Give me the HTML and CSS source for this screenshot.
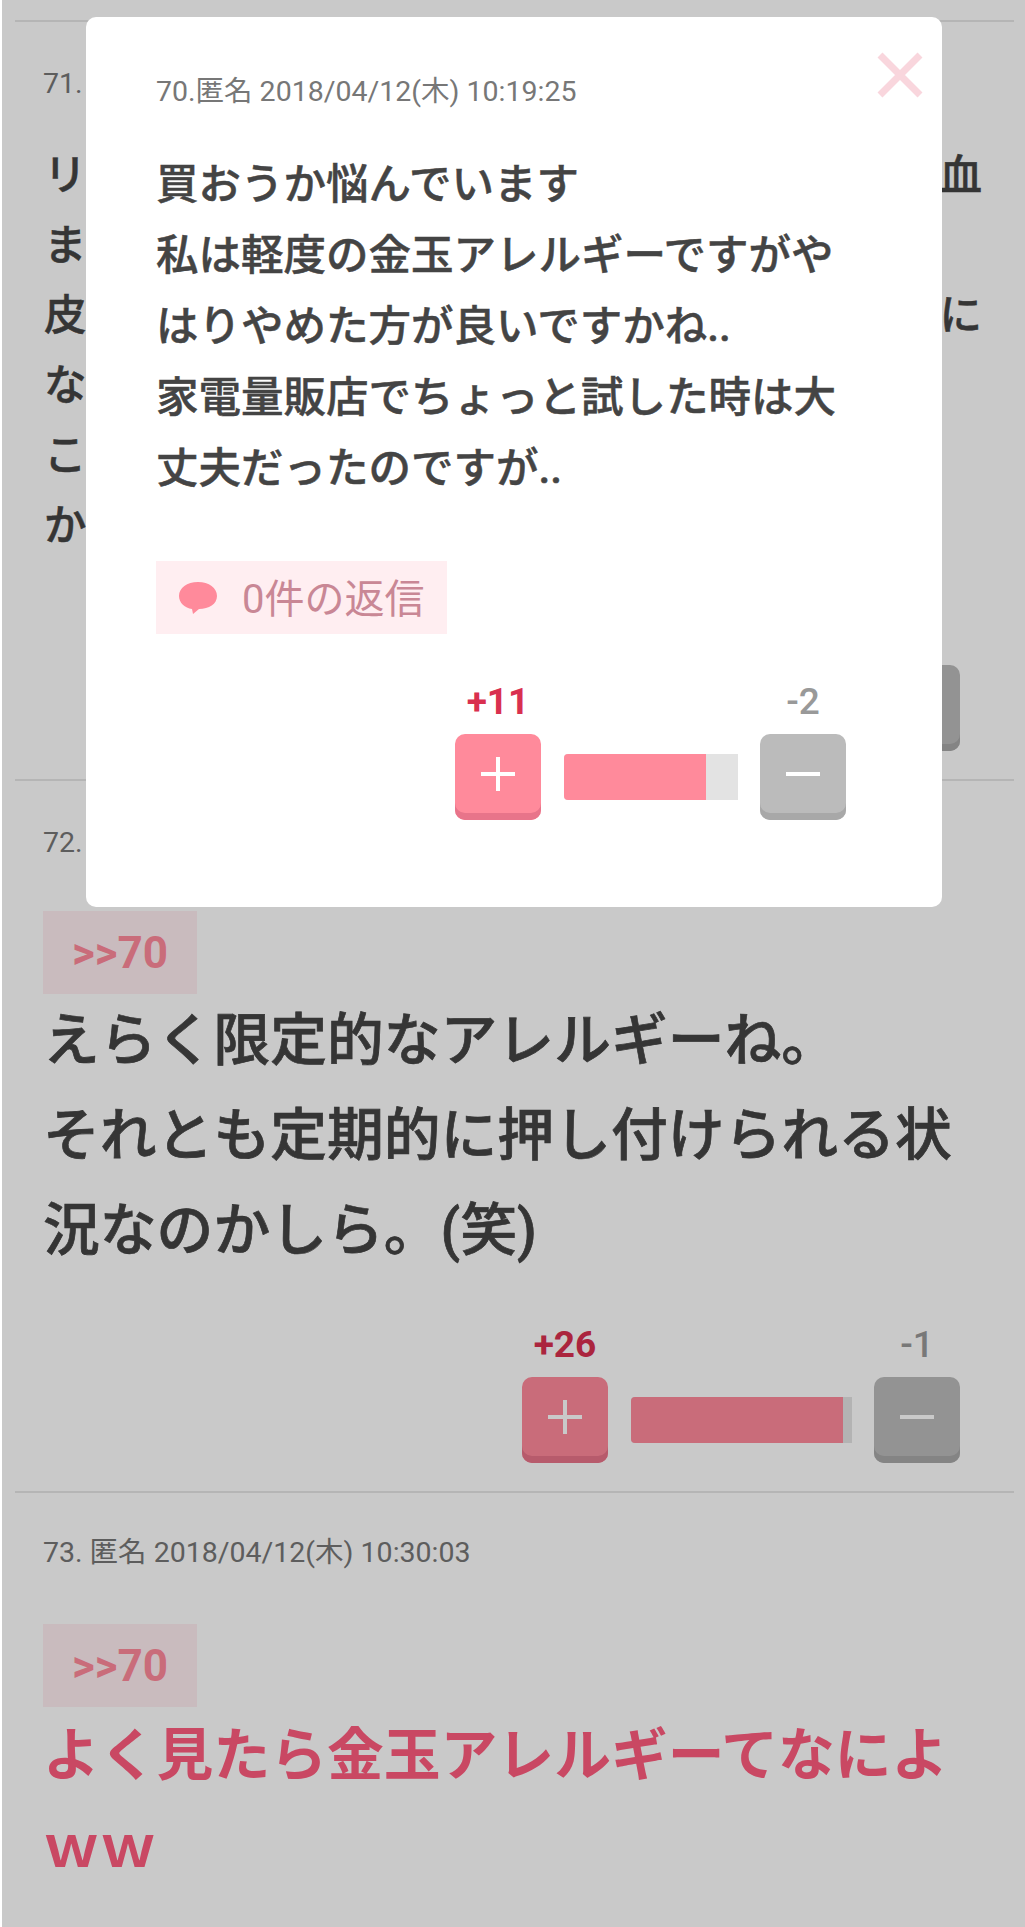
FILE: index.html
```html
<!DOCTYPE html>
<html lang="ja">
<head>
    <meta charset="UTF-8">
    <meta name="viewport" content="width=device-width, initial-scale=1.0">
    <title>コメント</title>
    <link rel="stylesheet" href="styles.css">
</head>
<body>
    <div class="thread">
        <div class="post">
            <div class="info">71.</div>
            <div class="cut-text">
                <div class="cut-line"><span>リ</span><span>血</span></div>
                <div class="cut-line"><span>ま</span></div>
                <div class="cut-line"><span>皮</span><span>に</span></div>
                <div class="cut-line"><span>な</span></div>
                <div class="cut-line"><span>こ</span></div>
                <div class="cut-line"><span>か</span></div>
            </div>
            <div class="votes votes-71">
                <div class="plus-count">+</div>
                <div></div>
                <div class="minus-count">-</div>
                <div class="vote-btn plus"></div>
                <div class="bar"></div>
                <div class="vote-btn minus"></div>
            </div>
        </div>
        <div class="post">
            <div class="info">72.</div>
            <div class="anchor">&gt;&gt;70</div>
            <div class="big-text">えらく限定的なアレルギーね。<br>それとも定期的に押し付けられる状<br>況なのかしら。(笑)</div>
            <div class="votes">
                <div class="plus-count">+26</div>
                <div></div>
                <div class="minus-count">-1</div>
                <div class="vote-btn plus">
                    <svg viewBox="0 0 40 40"><path d="M20 3V37M3 20H37"/></svg>
                </div>
                <div class="bar"><div class="bar-fill" style="width: 96%"></div></div>
                <div class="vote-btn minus">
                    <svg viewBox="0 0 40 40"><path d="M3 20H37"/></svg>
                </div>
            </div>
        </div>
        <div class="post post-last">
            <div class="info">73. 匿名 2018/04/12(木) 10:30:03</div>
            <div class="anchor">&gt;&gt;70</div>
            <div class="big-text red">よく見たら金玉アレルギーてなによ<br>ｗｗ</div>
        </div>
    </div>

    <div class="overlay"></div>

    <div class="modal">
        <svg class="close" viewBox="0 0 46 46"><path d="M3 3L43 43M43 3L3 43"/></svg>
        <div class="info">70.匿名 2018/04/12(木) 10:19:25</div>
        <div class="modal-text">買おうか悩んでいます<br>私は軽度の金玉アレルギーですがや<br>はりやめた方が良いですかね..<br>家電量販店でちょっと試した時は大<br>丈夫だったのですが..</div>
        <div class="reply">
            <svg viewBox="0 0 40 34"><path d="M20 1C31 1 39 7 39 15C39 23 31 28 21 28L15 33L14 28C7 27 1 22 1 15C1 7 9 1 20 1Z"/></svg>
            <span>0件の返信</span>
        </div>
        <div class="votes votes-modal">
            <div class="plus-count">+11</div>
            <div></div>
            <div class="minus-count">-2</div>
            <div class="vote-btn plus">
                <svg viewBox="0 0 40 40"><path d="M20 3V37M3 20H37"/></svg>
            </div>
            <div class="bar"><div class="bar-fill" style="width: 82%"></div></div>
            <div class="vote-btn minus">
                <svg viewBox="0 0 40 40"><path d="M3 20H37"/></svg>
            </div>
        </div>
    </div>
</body>
</html>
```

FILE: styles.css
```css
html, body {
    margin: 0;
    padding: 0;
}

body {
    position: relative;
    height: 1927px;
    overflow: hidden;
    background: #fff;
    color: #444;
    font-family: Roboto, "Noto Sans CJK JP", sans-serif;
}

.thread {
    margin: 20px 11px 0 15px;
    border-top: 2px solid #e6e6e6;
}

.post {
    padding: 44px 0 28px 28px;
    border-bottom: 2px solid #e6e6e6;
}

.post-last {
    padding-top: 42px;
    border-bottom: none;
}

.post-last .anchor {
    margin-top: 53px;
}

.info {
    font-size: 28.5px;
    line-height: 36px;
    color: #777;
    white-space: nowrap;
}

/* post behind the popup, only the edges can be seen */
.cut-text {
    margin-top: 39px;
    font-size: 42.5px;
    font-weight: 500;
    -webkit-text-stroke: 0.5px #444;
    line-height: 70px;
}

.cut-line {
    display: flex;
    justify-content: space-between;
    margin-left: 1px;
    padding-right: 32px;
}

.anchor {
    width: 154px;
    height: 83px;
    margin: 50px 0 -1px;
    background: #ffeef1;
    color: #ff8a9b;
    font-size: 44px;
    font-weight: 700;
    line-height: 84px;
    text-align: center;
}

.big-text {
    font-size: 56.8px;
    font-weight: 500;
    -webkit-text-stroke: 0.7px #444;
    line-height: 95px;
    white-space: nowrap;
}

.red {
    margin-top: 4px;
    color: #ff5c7e;
    font-weight: 700;
    -webkit-text-stroke: 0;
    line-height: 92px;
}

.votes {
    display: grid;
    grid-template-columns: 86px 221px 86px;
    column-gap: 22.5px;
    row-gap: 14px;
    justify-content: end;
    align-items: center;
    margin: 49px 54px 0 0;
    text-align: center;
    font-size: 37px;
    line-height: 36px;
}

.votes-71 {
    margin-top: 54px;
}

.plus-count {
    color: #d9304f;
    font-weight: 700;
}

.minus-count {
    color: #999;
    font-weight: 500;
}

.vote-btn {
    display: flex;
    align-items: center;
    justify-content: center;
    height: 80px;
    padding-bottom: 6px;
    border-radius: 10px;
}

.vote-btn svg {
    width: 40px;
    height: 40px;
    fill: none;
    stroke: #fff;
    stroke-width: 4;
}

.plus {
    background: #ff8a9b;
    box-shadow: inset 0 -7px 0 #e8748a;
}

.minus {
    background: #bbb;
    box-shadow: inset 0 -7px 0 #a8a8a8;
}

.bar {
    height: 46px;
    background: #e3e3e3;
    border-radius: 4px 0 0 4px;
}

.bar-fill {
    height: 100%;
    background: #ff8a9b;
    border-radius: 4px 0 0 4px;
}

.overlay {
    position: absolute;
    top: 0;
    bottom: 0;
    left: 2px;
    right: 0;
    background: rgba(0, 0, 0, 0.21);
}

.modal {
    position: absolute;
    top: 17px;
    left: 86px;
    width: 856px;
    height: 890px;
    box-sizing: border-box;
    padding: 57px 96px 0 70px;
    background: #fff;
    border-radius: 10px;
}

.close {
    position: absolute;
    top: 35px;
    right: 19px;
    width: 46px;
    height: 46px;
    fill: none;
    stroke: #f9d6dd;
    stroke-width: 7;
}

.modal-text {
    margin-top: 39px;
    font-size: 42.5px;
    font-weight: 500;
    -webkit-text-stroke: 0.5px #444;
    line-height: 71px;
    white-space: nowrap;
}

.reply {
    display: inline-flex;
    align-items: center;
    gap: 24px;
    width: 291px;
    height: 73px;
    margin-top: 57px;
    padding-left: 22px;
    box-sizing: border-box;
    background: #ffeef1;
    color: #c98795;
    font-size: 40px;
}

.reply svg {
    width: 40px;
    height: 34px;
    fill: #ff8a9b;
}

.reply span {
    margin-bottom: 4px;
}

.votes-modal {
    grid-template-columns: 86px 174px 86px;
    margin: 50px 0 0;
}
```
